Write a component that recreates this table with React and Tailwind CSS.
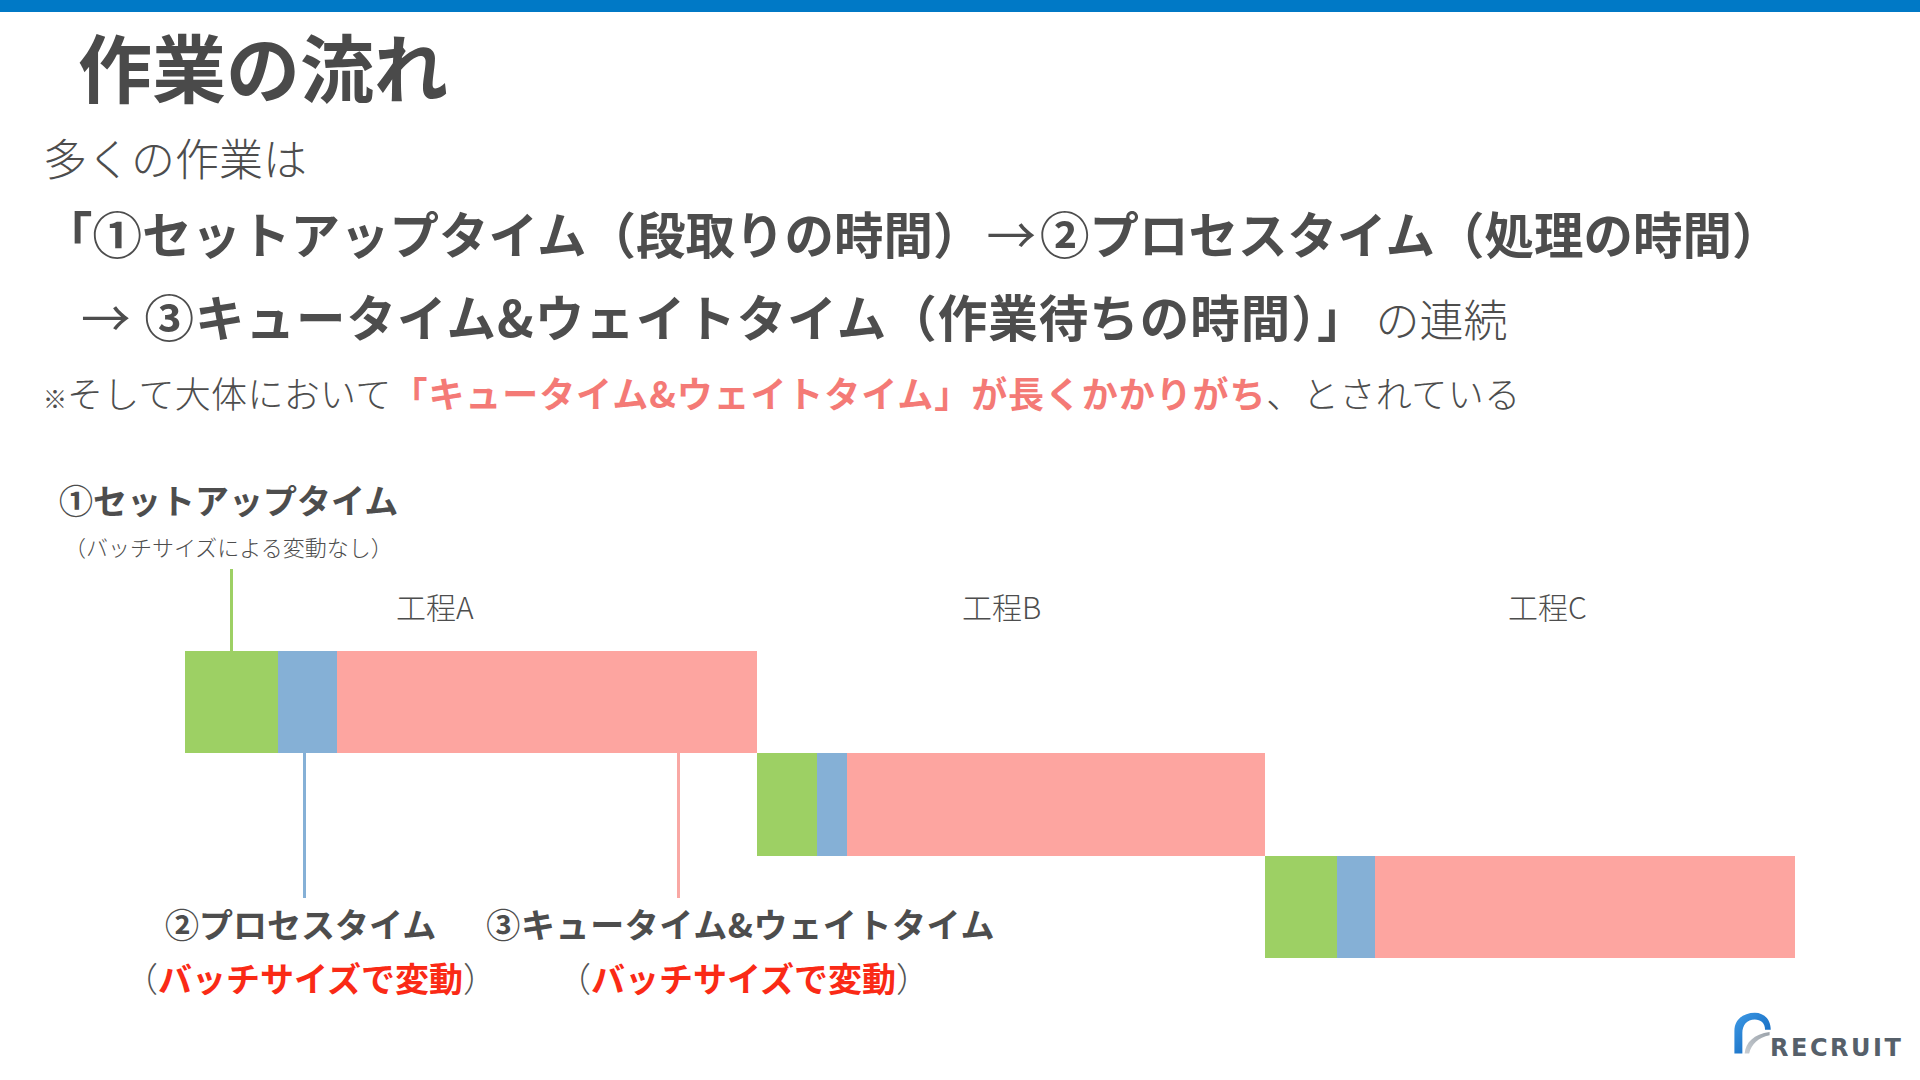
export default function App() {
  const green = "bg-[#9dd064]";
  return (
    <div className="relative w-[1920px] h-[1080px] overflow-hidden bg-white text-[#4d4d4d] font-['Noto_Sans_CJK_JP','Noto_Sans',sans-serif]">
      <div className="h-[12px] bg-[#0079c6]" />

      <div className="pl-[43px]">
        <h1 className="mt-[13px] ml-[35px] h-[80px] text-[74px] leading-[80px] font-bold text-[#4a4a4a]">
          作業の流れ
        </h1>
        <p className="mt-[22px] h-[60px] text-[44px] leading-[60px] font-light">多くの作業は</p>
        <p className="mt-[11px] h-[70px] text-[49.5px] leading-[70px] font-bold whitespace-nowrap">
          「①セットアップタイム（段取りの時間）<span className="font-normal mx-[4px]">→</span>②プロセスタイム（処理の時間）
        </p>
        <p className="mt-[13px] ml-[38px] h-[70px] text-[49.5px] leading-[70px] whitespace-nowrap">
          <span className="font-normal">→</span>
          <span className="font-bold ml-[14px] tracking-[1px]">③キュータイム&amp;ウェイトタイム（作業待ちの時間）」</span>
          <span className="ml-[8px] text-[44px] font-light">の連続</span>
        </p>
        <p className="mt-[16px] h-[50px] text-[36px] leading-[50px] font-light whitespace-nowrap">
          <span className="text-[24px]">※</span>
          <span className="tracking-[0.3px]">そして大体において</span>
          <span className="font-bold text-[#f47a76] tracking-[0.9px]">「キュータイム&amp;ウェイトタイム」が長くかかりがち</span>
          <span className="tracking-[0.5px]">、とされている</span>
        </p>
      </div>

      {/* diagram */}
      <div>
        <div className="mt-[61px] pl-[59px] h-[44px] text-[34px] leading-[44px] font-bold whitespace-nowrap">
          ①セットアップタイム
        </div>
        <div className="mt-[10px] pl-[64px] h-[28px] text-[22px] leading-[28px] font-light whitespace-nowrap">
          （バッチサイズによる変動なし）
        </div>
        <div className="mt-[26px] flex h-[40px] text-[30px] leading-[40px] font-light whitespace-nowrap">
          <span className="pl-[396px] w-[962px] shrink-0">工程A</span>
          <span className="w-[546px] shrink-0">工程B</span>
          <span>工程C</span>
        </div>

        <div className="mt-[25px]">
          <div className="ml-[185px] flex h-[102px]">
            <div className={`w-[93px] ${green}`} />
            <div className="w-[59px] bg-[#85b0d6]" />
            <div className="w-[420px] bg-[#fda5a0]" />
          </div>
          <div className="ml-[757px] flex h-[103px]">
            <div className={`w-[60px] ${green}`} />
            <div className="w-[30px] bg-[#85b0d6]" />
            <div className="w-[418px] bg-[#fda5a0]" />
          </div>
          <div className="flex items-start">
            <div className="w-[1265px] shrink-0 pt-[46px]">
              <div className="flex h-[44px] text-[34px] leading-[44px] font-bold whitespace-nowrap">
                <span className="ml-[165px]">②プロセスタイム</span>
                <span className="ml-[50px] tracking-[0.6px]">③キュータイム&amp;ウェイトタイム</span>
              </div>
              <div className="mt-[12px] flex h-[40px] text-[34px] leading-[40px] whitespace-nowrap">
                <span className="ml-[124px]">
                  <span className="font-light text-[#555]">（</span>
                  <span className="font-bold text-[#fa2a16]">バッチサイズで変動</span>
                  <span className="font-light text-[#555]">）</span>
                </span>
                <span className="ml-[60px]">
                  <span className="font-light text-[#555]">（</span>
                  <span className="font-bold text-[#fa2a16]">バッチサイズで変動</span>
                  <span className="font-light text-[#555]">）</span>
                </span>
              </div>
            </div>
            <div className="flex h-[102px]">
              <div className={`w-[72px] ${green}`} />
              <div className="w-[38px] bg-[#85b0d6]" />
              <div className="w-[420px] bg-[#fda5a0]" />
            </div>
          </div>
        </div>

        {/* logo */}
        <div className="mt-[12px] pl-[1731px] flex items-end">
          <svg width="42" height="45" viewBox="0 0 37 39">
            <defs>
              <linearGradient id="rg" x1="0" y1="0" x2="1" y2="1">
                <stop offset="0" stopColor="#3f9be6" />
                <stop offset="1" stopColor="#0a5fb8" />
              </linearGradient>
              <linearGradient id="gg" x1="0" y1="1" x2="1" y2="0">
                <stop offset="0" stopColor="#c9ced3" />
                <stop offset="1" stopColor="#9aa2aa" />
              </linearGradient>
            </defs>
            <path
              d="M3 38 L3 18 C3 8 11 2 21 2 C29 2 35 8 35 17 L30 17 C30 11 26 8 21 8 C14 8 10 13 10 20 L10 38 Z"
              fill="url(#rg)"
            />
            <path d="M12 38 C13 28 20 21 34 19 L34 22 C24 24 18 30 16 38 Z" fill="url(#gg)" />
          </svg>
          <span className="-mb-[5px] -ml-[3px] text-[24px] leading-none font-bold tracking-[2.5px] text-[#56606a] font-['DejaVu_Sans',sans-serif]">
            RECRUIT
          </span>
        </div>
      </div>

      {/* connectors */}
      <div className={`absolute left-[230px] top-[569px] w-[3px] h-[82px] ${green}`} />
      <div className="absolute left-[303px] top-[753px] w-[3px] h-[145px] bg-[#85b0d6]" />
      <div className="absolute left-[677px] top-[753px] w-[3px] h-[145px] bg-[#f9a8a4]" />
    </div>
  );
}
